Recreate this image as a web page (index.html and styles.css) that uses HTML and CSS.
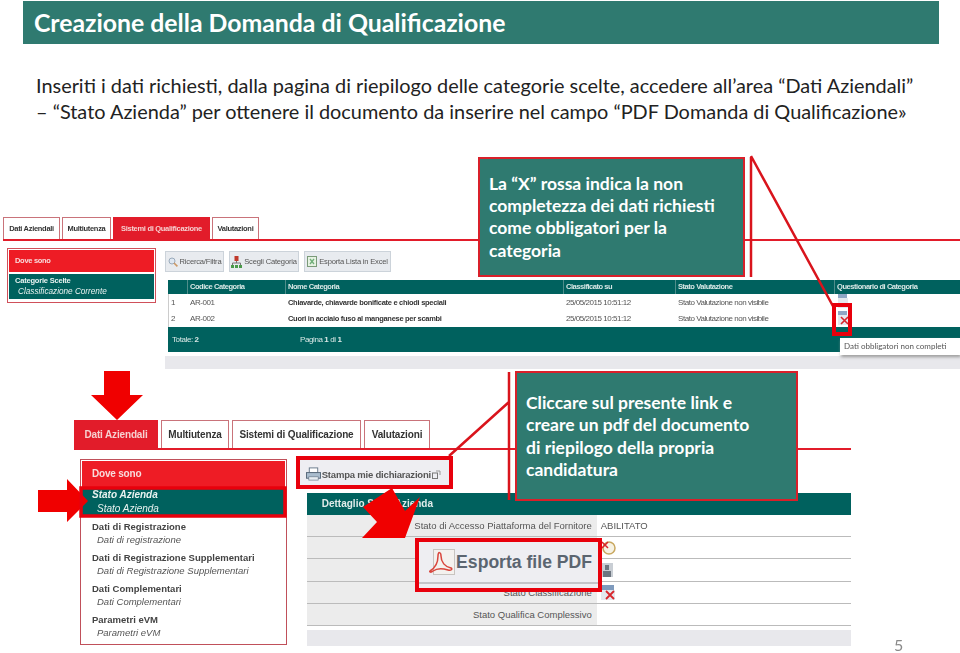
FILE: index.html
```html
<!DOCTYPE html>
<html lang="it">
<head>
    <meta charset="UTF-8">
    <title>Creazione della Domanda di Qualificazione</title>
    <link rel="stylesheet" href="styles.css">
</head>
<body>
<div class="slide">
    <h1 class="title">Creazione della Domanda di Qualificazione</h1>
    <p class="intro">Inseriti i dati richiesti, dalla pagina di riepilogo delle categorie scelte, accedere all’area “Dati Aziendali”<br>– “Stato Azienda” per ottenere il documento da inserire nel campo “PDF Domanda di Qualificazione»</p>

    <!-- first screenshot: Sistemi di Qualificazione -->
    <section class="shot shot-top">
        <div class="tabs">
            <span class="tab tab-a">Dati Aziendali</span>
            <span class="tab tab-b">Multiutenza</span>
            <span class="tab tab-c active">Sistemi di Qualificazione</span>
            <span class="tab tab-d">Valutazioni</span>
        </div>
        <div class="shot-body">
            <aside class="where">
                <div class="where-head">Dove sono</div>
                <div class="where-sel">
                    <b>Categorie Scelte</b>
                    <i>Classificazione Corrente</i>
                </div>
            </aside>
            <div class="main">
                <div class="toolbar">
                    <span class="tool tool-a">
                        <svg width="10" height="10" viewBox="0 0 10 10"><circle cx="4" cy="4" r="3" fill="#dfe8f2" stroke="#9ab"/><path d="M6 6l3.4 3.4" stroke="#c96" stroke-width="1.6"/></svg>
                        Ricerca/Filtra
                    </span>
                    <span class="tool tool-b">
                        <svg width="11" height="12" viewBox="0 0 11 12"><rect x="3.5" y="0" width="4" height="5" fill="#c0392b"/><path d="M5.500 5v2M1.500 9V7h8v2" stroke="#777" fill="none"/><rect x="0" y="9" width="3" height="3" fill="#4a9a4a"/><rect x="4" y="9" width="3" height="3" fill="#4a9a4a"/><rect x="8" y="9" width="3" height="3" fill="#4a9a4a"/></svg>
                        Scegli Categoria
                    </span>
                    <span class="tool tool-c">
                        <svg width="10" height="11" viewBox="0 0 10 11"><rect x="0.500" y="0.500" width="9" height="10" fill="#e6f2e2" stroke="#7a9a78"/><path d="M3 3l4 5M7 3L3 8" stroke="#6fae78" stroke-width="1.3"/></svg>
                        Esporta Lista in Excel
                    </span>
                </div>
                <div class="grid grid-head">
                    <span></span>
                    <span>Codice Categoria</span>
                    <span>Nome Categoria</span>
                    <span>Classificato su</span>
                    <span>Stato Valutazione</span>
                    <span>Questionario di Categoria</span>
                </div>
                <div class="grid grid-row">
                    <span>1</span>
                    <span>AR-001</span>
                    <span class="strong">Chiavarde, chiavarde bonificate e chiodi speciali</span>
                    <span>25/05/2015 10:51:12</span>
                    <span>Stato Valutazione non visibile</span>
                    <span class="doc-cell">
                        <svg class="doc-icon" width="12" height="14" viewBox="0 0 12 14"><rect x="1" y="0" width="9" height="4" fill="#8fa6c4"/><rect x="1" y="4" width="10" height="10" fill="#e4e8ee"/></svg>
                    </span>
                </div>
                <div class="grid grid-row">
                    <span>2</span>
                    <span>AR-002</span>
                    <span class="strong">Cuori in acciaio fuso al manganese per scambi</span>
                    <span>25/05/2015 10:51:12</span>
                    <span>Stato Valutazione non visibile</span>
                    <span class="doc-cell">
                        <svg class="doc-icon" width="12" height="14" viewBox="0 0 12 14"><rect x="1" y="0" width="9" height="4" fill="#8fa6c4"/><rect x="1" y="4" width="10" height="10" fill="#e4e8ee"/><path d="M4 6l7 7M11 6l-7 7" stroke="#d8262c" stroke-width="1.6"/></svg>
                    </span>
                </div>
                <div class="grid-foot">
                    <span class="foot-total">Totale: <b>2</b></span>
                    <span>Pagina <b>1</b> di <b>1</b></span>
                </div>
                <div class="bar bar-top"></div>
            </div>
        </div>
        <div class="tooltip">Dati obbligatori non completi</div>
    </section>

    <!-- second screenshot: Dati Aziendali -->
    <section class="shot shot-low">
        <div class="tabs">
            <span class="tab tab-e active">Dati Aziendali</span>
            <span class="tab tab-f">Multiutenza</span>
            <span class="tab tab-g">Sistemi di Qualificazione</span>
            <span class="tab tab-h">Valutazioni</span>
        </div>
        <div class="shot-body">
            <aside class="menu">
                <div class="menu-head">Dove sono</div>
                <div class="menu-sel">
                    <b>Stato Azienda</b>
                    <i>Stato Azienda</i>
                </div>
                <div class="menu-item"><b>Dati di Registrazione</b><i>Dati di registrazione</i></div>
                <div class="menu-item"><b>Dati di Registrazione Supplementari</b><i>Dati di Registrazione Supplementari</i></div>
                <div class="menu-item"><b>Dati Complementari</b><i>Dati Complementari</i></div>
                <div class="menu-item"><b>Parametri eVM</b><i>Parametri eVM</i></div>
            </aside>
            <div class="detail-wrap">
                <div class="print-btn">
                    <svg width="15" height="14" viewBox="0 0 16 14"><rect x="3.500" y="0.500" width="9" height="5" fill="#fff" stroke="#678"/><rect x="0.500" y="5.500" width="15" height="6" fill="#a9bccd" stroke="#567"/><rect x="3" y="10" width="10" height="3.500" fill="#e8edf2" stroke="#678" stroke-width="0.700"/></svg>
                    <span>Stampa mie dichiarazioni</span>
                    <svg width="9" height="9" viewBox="0 0 9 9"><rect x="0.500" y="3" width="5" height="5.500" fill="none" stroke="#777"/><path d="M4 1h4v4" fill="none" stroke="#999"/></svg>
                </div>
                <div class="detail">
                    <div class="detail-head">Dettaglio Stato Azienda</div>
                    <div class="detail-row"><span class="lab">Stato di Accesso Piattaforma del Fornitore</span><span class="val">ABILITATO</span></div>
                    <div class="detail-row"><span class="lab"></span><span class="val">
                        <svg width="15" height="15" viewBox="0 0 15 15"><circle cx="8" cy="8" r="6" fill="#f6f2e4" stroke="#c9a860" stroke-width="1.500"/><path d="M1 2l6 6M7 2L1 8" stroke="#d8262c" stroke-width="1.500"/></svg>
                    </span></div>
                    <div class="detail-row"><span class="lab"></span><span class="val">
                        <svg width="12" height="14" viewBox="0 0 12 14"><rect width="12" height="14" fill="#c9ced4"/><rect x="4" y="2" width="4" height="5" fill="#6d7680"/><rect x="2" y="8" width="8" height="6" fill="#6d7680"/></svg>
                    </span></div>
                    <div class="detail-row"><span class="lab">Stato Classificazione</span><span class="val">
                        <svg width="15" height="15" viewBox="0 0 15 15"><rect width="13" height="5" fill="#7f9bbd"/><rect y="5" width="14" height="10" fill="#e4e8ee"/><path d="M5 6l8 8M13 6l-8 8" stroke="#d8262c" stroke-width="1.800"/></svg>
                    </span></div>
                    <div class="detail-row"><span class="lab">Stato Qualifica Complessivo</span><span class="val"></span></div>
                </div>
                <div class="bar bar-low"></div>
            </div>
        </div>
    </section>

    <!-- callout connectors and big arrows -->
    <svg class="marks" width="960" height="653" viewBox="0 0 960 653">
        <path d="M751 157V277M751 156L834 308" stroke="#d9141c" stroke-width="2.500" fill="none"/>
        <rect x="834" y="305" width="16" height="29" fill="none" stroke="#e8000c" stroke-width="4"/>
        <path d="M509 372V500M509 402L449 456" stroke="#d9141c" stroke-width="2.500" fill="none"/>
        <polygon points="104,371 130,371 130,395 143,395 117,420 91,395 104,395" fill="#f00000"/>
        <polygon points="38,490 67,490 67,479 88,501 67,522 67,512 38,512" fill="#f00000"/>
        <rect x="81" y="488" width="204" height="28" fill="none" stroke="#e8000c" stroke-width="3.500"/>
        <rect x="298" y="458" width="153" height="29" fill="none" stroke="#e8000c" stroke-width="4"/>
        <polygon points="392,488 363,507 377,522 362,538 405,538 420,497 405,511" fill="#f00000"/>
    </svg>

    <div class="pdf-btn">
        <svg width="26" height="26" viewBox="0 0 26 26"><rect x="4.500" y="0.500" width="21" height="25" fill="#f4f1ee" stroke="#c8c4c0"/><path d="M1 22c5-3 8-9 8-15 0-5 3-4 3 0 0 6 4 11 10 12 2 1 0 3-3 2-6-2-11-2-15 1-2 2-4 1-3 0z" fill="none" stroke="#d9453c" stroke-width="1.500"/></svg>
        <span>Esporta file PDF</span>
    </div>

    <div class="callout callout-x">La “X” rossa indica la non<br>completezza dei dati richiesti<br>come obbligatori per la<br>categoria</div>
    <div class="callout callout-link">Cliccare sul presente link e<br>creare un pdf del documento<br>di riepilogo della propria<br>candidatura</div>

    <span class="page-num">5</span>
</div>
</body>
</html>
```

FILE: styles.css
```css
html, body {
    margin: 0;
    padding: 0;
    background: #fff;
}
.slide {
    position: relative;
    width: 960px;
    height: 653px;
    overflow: hidden;
    font-family: Lato, "Open Sans", sans-serif;
    background: #fff;
}
.title {
    position: absolute;
    left: 23px;
    top: 1px;
    width: 905px;
    height: 43px;
    margin: 0;
    padding-left: 11px;
    background: #2f7a70;
    color: #fff;
    font-size: 24.8px;
    font-weight: 700;
    line-height: 44px;
    white-space: nowrap;
}
.intro {
    position: absolute;
    left: 36px;
    top: 73px;
    margin: 0;
    color: #222;
    font-size: 19.9px;
    line-height: 25.5px;
    white-space: nowrap;
}

/* screenshots */
.shot {
    position: absolute;
    font-family: "Liberation Sans", Arial, sans-serif;
    filter: blur(0.4px);
}
.shot-top {
    left: 3px;
    top: 217px;
    width: 957px;
    font-size: 8px;
}
.shot-low {
    left: 74px;
    top: 420px;
    width: 777px;
    font-size: 10px;
}
.tabs {
    display: flex;
    border-bottom: 2px solid #e21c2a;
}
.shot-top .tabs {
    height: 22px;
    gap: 2px;
    font-size: 7.5px;
    letter-spacing: -0.3px;
}
.shot-low .tabs {
    height: 28px;
    gap: 3px;
    letter-spacing: -0.15px;
}
.tab {
    display: flex;
    align-items: center;
    justify-content: center;
    box-sizing: border-box;
    border: 1px solid #c9737a;
    border-bottom: none;
    font-weight: 700;
    color: #333;
    white-space: nowrap;
}
.tab.active {
    background: #e21c2a;
    border-color: #e21c2a;
    color: #f6d0d0;
}
.tab-a { width: 57px; }
.tab-b { width: 49px; }
.tab-c { width: 97px; }
.tab-d { width: 47px; }
.tab-e { width: 84px; }
.tab-f { width: 68px; }
.tab-g { width: 129px; }
.tab-h { width: 66px; }

.shot-body {
    display: flex;
}

/* top screenshot body */
.where {
    box-sizing: border-box;
    width: 149px;
    height: 55px;
    margin: 7px 0 0 4px;
    padding: 1px;
    border: 1px solid #d0505a;
}
.where-head {
    height: 22px;
    padding-left: 6px;
    background: #ee1c25;
    color: #f8dcdc;
    font-size: 7.5px;
    font-weight: 700;
    letter-spacing: -0.3px;
    line-height: 22px;
}
.where-sel {
    height: 25px;
    margin-top: 2px;
    padding-left: 6px;
    background: #00615e;
    color: #e8f2f0;
    line-height: 11px;
}
.where-sel b, .where-sel i {
    display: block;
}
.where-sel b {
    padding-top: 1px;
    font-size: 7.5px;
    letter-spacing: -0.2px;
}
.where-sel i {
    padding-left: 3px;
    font-size: 8.2px;
}
.main {
    width: 795px;
    margin-left: 9px;
    padding-top: 10px;
}
.toolbar {
    display: flex;
    gap: 5px;
    height: 21px;
}
.tool {
    display: flex;
    align-items: center;
    justify-content: center;
    gap: 2px;
    box-sizing: border-box;
    background: #e8ebef;
    border: 1px solid #ccd3da;
    color: #555;
    font-size: 7.6px;
    letter-spacing: -0.2px;
    white-space: nowrap;
}
.tool-a { width: 59px; }
.tool-b { width: 70px; }
.tool-c { width: 87px; }
.grid {
    display: grid;
    grid-template-columns: 19px 98px 278px 112px 159px 126px;
    margin-left: 3px;
    align-items: center;
}
.grid-head {
    height: 14px;
    margin-top: 8px;
    background: #00615e;
    color: #d9e8e6;
    font-weight: 700;
    font-size: 7.5px;
    letter-spacing: -0.45px;
}
.grid-head span {
    height: 14px;
    padding-left: 2px;
    line-height: 14px;
    border-left: 1px solid #4f8d8a;
    box-sizing: border-box;
}
.grid-head span:first-child {
    border-left: none;
}
.grid-row {
    height: 16.5px;
    border-left: 1px solid #ccc;
    color: #555;
    font-size: 8px;
    letter-spacing: -0.45px;
    white-space: nowrap;
}
.grid-row span {
    padding-left: 2px;
}
.grid-row .strong {
    color: #333;
    font-weight: 700;
    font-size: 7.5px;
    letter-spacing: -0.3px;
}
.doc-cell {
    height: 16px;
}
.doc-icon {
    display: block;
}
.grid-foot {
    display: flex;
    align-items: center;
    height: 25px;
    margin-left: 3px;
    padding-left: 4px;
    background: #00615e;
    color: #d9e8e6;
    letter-spacing: -0.4px;
}
.foot-total {
    width: 128px;
}
.bar {
    background: #e8e8ec;
}
.bar-top {
    height: 13px;
    margin-top: 4px;
}
.tooltip {
    position: absolute;
    left: 837px;
    top: 121px;
    width: 116px;
    height: 17px;
    padding-left: 4px;
    background: #fff;
    box-shadow: 1px 2px 3px #999;
    color: #555;
    font-family: Lato, sans-serif;
    font-size: 8px;
    line-height: 16px;
    white-space: nowrap;
}

/* lower screenshot body */
.menu {
    box-sizing: border-box;
    width: 207px;
    height: 186px;
    margin: 9px 0 0 6px;
    padding: 1px;
    border: 1px solid #c0505a;
}
.menu-head {
    height: 26px;
    padding-left: 10px;
    background: #ee1c25;
    color: #f8dcdc;
    font-weight: 700;
    letter-spacing: -0.2px;
    line-height: 26px;
}
.menu-sel {
    height: 29px;
    padding-left: 10px;
    background: #00615e;
    color: #e8f2f0;
}
.menu-sel b, .menu-sel i, .menu-item b, .menu-item i {
    display: block;
    line-height: 13.5px;
}
.menu-sel b {
    padding-top: 1px;
    font-style: italic;
}
.menu-sel i, .menu-item i {
    padding-left: 5px;
}
.menu-item {
    height: 31px;
    padding: 3.5px 0 0 10px;
    box-sizing: border-box;
    color: #444;
    font-size: 9.5px;
}
.menu-item i {
    color: #555;
    font-size: 9.5px;
}
.detail-wrap {
    width: 554px;
    margin-left: 11px;
    padding-top: 9px;
}
.print-btn {
    display: flex;
    align-items: center;
    gap: 1px;
    box-sizing: border-box;
    width: 154px;
    height: 30px;
    padding-left: 8px;
    background: #eeeef2;
    color: #555;
    font-size: 9.5px;
    font-weight: 700;
    letter-spacing: -0.2px;
    white-space: nowrap;
}
.detail {
    margin: 4px 0 0 9px;
    font-size: 9.5px;
}
.detail-head {
    height: 22px;
    padding-left: 15px;
    background: #00615e;
    color: #e0ecea;
    font-size: 10px;
    font-weight: 700;
    line-height: 22px;
}
.detail-row {
    display: flex;
    box-sizing: border-box;
    height: 22.2px;
    border-bottom: 1px solid #bbb;
    color: #555;
}
.lab {
    box-sizing: border-box;
    width: 290px;
    padding-right: 5px;
    background: #ececec;
    line-height: 21px;
    text-align: right;
    white-space: nowrap;
}
.val {
    display: flex;
    align-items: center;
    padding-left: 4px;
}
.bar-low {
    height: 16px;
    margin: 4px 0 0 9px;
}

/* overlays */
.marks {
    position: absolute;
    left: 0;
    top: 0;
}
.pdf-btn {
    position: absolute;
    left: 415px;
    top: 538px;
    display: flex;
    align-items: center;
    justify-content: flex-end;
    gap: 1px;
    box-sizing: border-box;
    width: 187px;
    height: 54px;
    padding: 0 6px 6px 0;
    background: linear-gradient(#eeeef2 88%, #c4c4c8 88%, #c4c4c8 92%, #eeeef2 92%);
    border: 4px solid #e8000c;
    color: #5b6570;
    font-family: "Liberation Sans", Arial, sans-serif;
    font-size: 17.6px;
    font-weight: 700;
    white-space: nowrap;
}
.callout {
    position: absolute;
    box-sizing: border-box;
    background: #2f7a70;
    border: 2.5px solid #d9202a;
    color: #fff;
    font-size: 17.5px;
    font-weight: 700;
    line-height: 22.4px;
    white-space: nowrap;
}
.callout-x {
    left: 478px;
    top: 157px;
    width: 267px;
    height: 120px;
    padding: 13.5px 0 0 9px;
}
.callout-link {
    left: 515px;
    top: 371px;
    width: 283px;
    height: 130px;
    padding: 19px 0 0 9px;
}
.page-num {
    position: absolute;
    left: 894px;
    top: 637px;
    color: #8a8a8a;
    font-size: 16px;
    line-height: 16px;
}
```
